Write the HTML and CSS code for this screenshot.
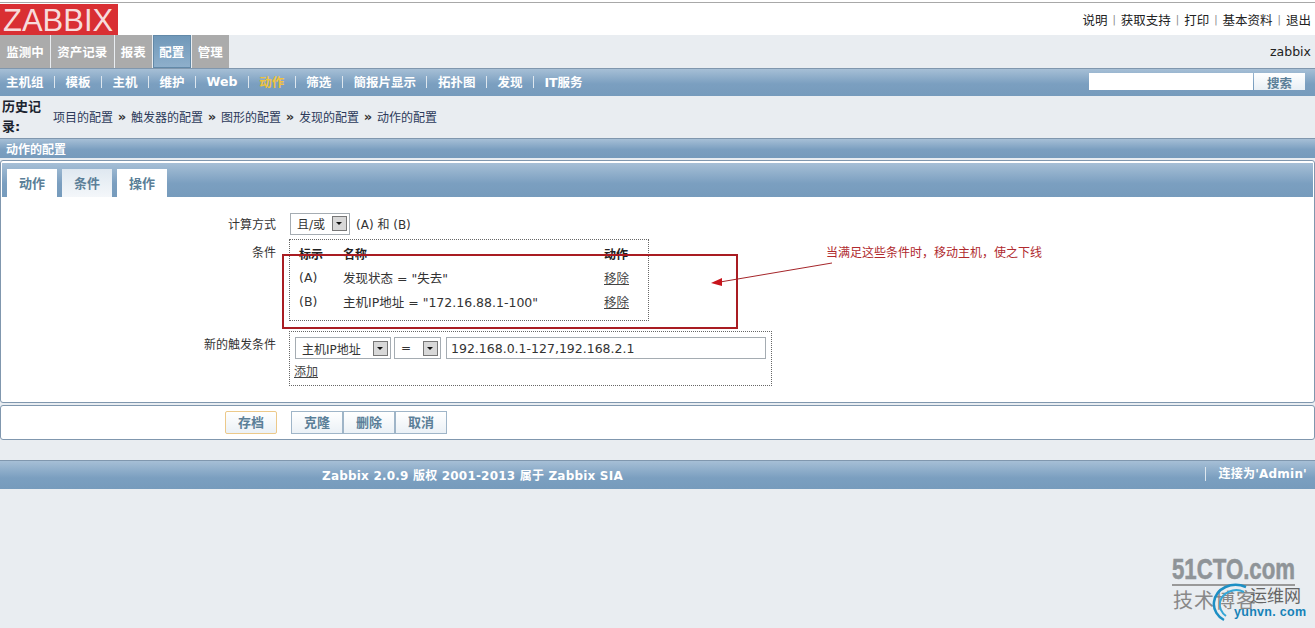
FILE: index.html
```html
<!DOCTYPE html>
<html lang="zh-CN">
<head>
    <meta charset="UTF-8">
    <title>动作的配置</title>
    <link rel="stylesheet" href="styles.css">
</head>
<body>
    <div class="header">
        <div class="logo">ZABBIX</div>
        <div class="top-links">
            <a>说明</a><i>|</i><a>获取支持</a><i>|</i><a>打印</a><i>|</i><a>基本资料</a><i>|</i><a>退出</a>
        </div>
    </div>

    <div class="main-menu">
        <a>监测中</a><a>资产记录</a><a>报表</a><a class="active">配置</a><a>管理</a>
        <span class="user">zabbix</span>
    </div>

    <div class="sub-menu">
        <a>主机组</a><i></i><a>模板</a><i></i><a>主机</a><i></i><a>维护</a><i></i><a>Web</a><i></i><a class="current">动作</a><i></i><a>筛选</a><i></i><a>簡报片显示</a><i></i><a>拓扑图</a><i></i><a>发现</a><i></i><a>IT服务</a>
        <div class="search">
            <div class="search-input"></div>
            <div class="search-btn">搜索</div>
        </div>
    </div>

    <div class="history">
        <strong>历史记录:</strong>
        <div class="trail">
            <a>项目的配置</a><b>»</b><a>触发器的配置</a><b>»</b><a>图形的配置</a><b>»</b><a>发现的配置</a><b>»</b><a>动作的配置</a>
        </div>
    </div>

    <div class="title-bar">动作的配置</div>

    <div class="box form-box">
        <div class="tabs">
            <a>动作</a><a class="selected">条件</a><a>操作</a>
        </div>
        <div class="form">
            <div class="form-row calc-row">
                <label>计算方式</label>
                <div class="field">
                    <span class="select calc-select">且/或<span class="arrow"></span></span>
                    <span>(A) 和 (B)</span>
                </div>
            </div>
            <div class="form-row cond-row">
                <label>条件</label>
                <div class="dotted cond-box">
                    <div class="cond-line cond-head"><span class="c1">标示</span><span class="c2">名称</span><span>动作</span></div>
                    <div class="cond-line"><span class="c1">(A)</span><span class="c2">发现状态 = "失去"</span><a class="link">移除</a></div>
                    <div class="cond-line"><span class="c1">(B)</span><span class="c2">主机IP地址 = "172.16.88.1-100"</span><a class="link">移除</a></div>
                </div>
            </div>
            <div class="form-row new-row">
                <label>新的触发条件</label>
                <div class="dotted new-box">
                    <div class="new-line">
                        <span class="select type-select">主机IP地址<span class="arrow"></span></span>
                        <span class="select op-select">=<span class="arrow"></span></span>
                        <span class="text-input">192.168.0.1-127,192.168.2.1</span>
                    </div>
                    <a class="link add-link">添加</a>
                </div>
            </div>
        </div>
    </div>

    <div class="box button-box">
        <a class="btn save">存档</a>
        <div class="btn-group">
            <a class="btn">克隆</a><a class="btn">删除</a><a class="btn">取消</a>
        </div>
    </div>

    <div class="footer">
        <span class="copyright">Zabbix 2.0.9 版权 2001-2013 属于 Zabbix SIA</span>
        <span class="connected">连接为'Admin'</span>
    </div>

    <!-- annotation drawn over the screenshot -->
    <svg class="annotation" width="1315" height="628" viewBox="0 0 1315 628">
        <rect x="283" y="255" width="454" height="73" fill="none" stroke="#a91c22" stroke-width="2"/>
        <line x1="832" y1="263" x2="720" y2="282" stroke="#a5252a" stroke-width="1"/>
        <polygon points="711,283 722,278 722,286" fill="#c8141c"/>
    </svg>
    <div class="note">当满足这些条件时，移动主机，使之下线</div>

    <div class="watermark">
        <div class="wm-top">51CTO.com</div>
        <div class="wm-line"></div>
        <div class="wm-cn">技术博客</div>
        <div class="wm-cn2">运维网</div>
        <svg class="wm-ring" width="38" height="40" viewBox="0 0 38 40">
            <path d="M34 5C20-1 4 6 2 20c-1 8 4 15 10 18" fill="none" stroke="#1d8fc4" stroke-width="2.5"/>
            <path d="M32 10C22 5 10 11 8 20c-1 6 2 11 6 14" fill="none" stroke="#36a6d6" stroke-width="2"/>
        </svg>
        <div class="wm-site">yunvn. com</div>
    </div>
</body>
</html>
```

FILE: styles.css
```css
html, body {
    margin: 0;
    padding: 0;
}

body {
    position: relative;
    width: 1315px;
    height: 628px;
    overflow: hidden;
    background: #e9edf1;
    font-family: "DejaVu Sans", "Noto Sans CJK SC", sans-serif;
    font-size: 12px;
    color: #333;
}

i {
    font-style: normal;
}

.header {
    display: flex;
    justify-content: space-between;
    align-items: center;
    height: 32px;
    padding-top: 3px;
    background: #fff;
    box-shadow: inset 0 2px 0 #fff, inset 0 3px 0 #a8a8a8;
}

.logo {
    width: 118px;
    height: 29px;
    margin-top: 1px;
    padding-top: 2px;
    background: #d92f33;
    color: #f7dcdc;
    font-family: "Liberation Sans", sans-serif;
    font-size: 31px;
    line-height: 29px;
    text-indent: 3px;
}

.top-links {
    display: flex;
    align-items: center;
    padding-right: 4px;
    color: #222;
    font-size: 12.5px;
}

.top-links i {
    margin: 0 5px;
    color: #888;
    font-size: 10px;
}

.main-menu {
    display: flex;
    align-items: stretch;
    height: 33px;
}

.main-menu a {
    display: flex;
    align-items: center;
    padding: 0 6.25px;
    margin-right: 1px;
    background: #ababab;
    color: #fff;
    font-weight: bold;
    font-size: 12.5px;
}

.main-menu a.active {
    background: linear-gradient(#6f97b8, #8fb0cc);
    box-shadow: inset 0 0 0 1px #6289a8;
}

.main-menu .user {
    margin-left: auto;
    padding-right: 4px;
    align-self: center;
    font-size: 12.5px;
    color: #222;
}

.sub-menu {
    display: flex;
    align-items: center;
    height: 28px;
    padding: 0 0 2px 6px;
    background: linear-gradient(#a6bfd6, #7b9fc0 55%, #769bbc);
    border-top: 1px solid #8097ae;
    box-sizing: border-box;
    color: #fff;
    font-weight: bold;
    font-size: 12.5px;
}

.sub-menu i {
    width: 1px;
    height: 12px;
    margin: 0 10.5px;
    background: #dde6ee;
}

.sub-menu .current {
    color: #f0c33c;
}

.search {
    display: flex;
    margin-left: auto;
    margin-right: 10px;
    height: 17px;
}

.search-input {
    width: 164px;
    background: #fff;
}

.search-btn {
    width: 51px;
    height: 17px;
    box-sizing: border-box;
    margin-left: 1px;
    padding-top: 4px;
    background: linear-gradient(#fff, #e8eff5);
    color: #5b7f98;
    text-align: center;
    line-height: 13px;
}

.history {
    display: flex;
    align-items: center;
    height: 42px;
    box-sizing: border-box;
    padding-left: 2px;
    color: #2c3a5a;
}

.history strong {
    width: 51px;
    flex: none;
    color: #1c2430;
    font-size: 13px;
    line-height: 20px;
}

.trail {
    display: flex;
    align-items: center;
    padding-bottom: 2px;
}

.trail b {
    width: 18px;
    color: #333;
    font-size: 13px;
    text-align: center;
}

.title-bar {
    height: 20px;
    padding: 3px 0 0 6px;
    background: linear-gradient(#a6bfd6, #7b9fc0 55%, #769bbc);
    border-top: 1px solid #8097ae;
    box-sizing: border-box;
    color: #fff;
    font-weight: bold;
    line-height: 16px;
}

.box {
    background: #fff;
    border: 1px solid #8097ae;
    border-radius: 3px;
    box-sizing: border-box;
}

.form-box {
    height: 243px;
    margin-top: 2px;
    padding-top: 2px;
}

.tabs {
    display: flex;
    align-items: flex-end;
    gap: 5px;
    height: 34px;
    margin: 0 1px;
    padding-left: 5px;
    background: linear-gradient(#a6bfd6, #7b9fc0 60%, #769bbc);
}

.tabs a {
    width: 50px;
    height: 28px;
    box-sizing: border-box;
    padding-top: 1px;
    background: #fff;
    color: #5b7f98;
    font-weight: bold;
    font-size: 13px;
    line-height: 27px;
    text-align: center;
}

.tabs a.selected {
    background: linear-gradient(#dfe8f0, #f4f7fa);
}

.form {
    display: flex;
    flex-direction: column;
    padding-top: 13px;
}

.form-row {
    display: flex;
}

.form-row label {
    width: 275px;
    text-align: right;
    color: #333;
}

.calc-row {
    height: 27px;
    align-items: center;
}

.field {
    display: flex;
    align-items: center;
    gap: 6px;
    margin-left: 14px;
}

.select {
    display: inline-flex;
    align-items: center;
    justify-content: space-between;
    box-sizing: border-box;
    height: 22px;
    padding: 0 2px 0 6px;
    border: 1px solid #a5acb2;
    background: #fff;
}

.calc-select {
    width: 60px;
}

.type-select {
    width: 96px;
}

.op-select {
    width: 47px;
}

.arrow {
    position: relative;
    width: 15px;
    height: 15px;
    box-sizing: border-box;
    border: 1px solid #777;
    background: #d8d8d8;
}

.arrow::after {
    content: "";
    position: absolute;
    left: 3px;
    top: 5px;
    border: 3.5px solid transparent;
    border-top-color: #111;
    border-bottom: 0;
}

.dotted {
    box-sizing: border-box;
    border: 1px dotted #666;
    background: #fff;
}

.cond-row {
    margin-top: 2px;
    height: 82px;
}

.cond-row label,
.new-row label {
    line-height: 18px;
    padding-top: 5px;
}

.cond-box {
    width: 360px;
    height: 82px;
    margin-left: 13px;
    padding: 3px 9px;
}

.cond-line {
    display: flex;
    align-items: center;
    height: 24px;
    font-size: 12.5px;
}

.cond-head {
    height: 20px;
    margin-bottom: 2px;
    font-size: 12px;
    font-weight: bold;
    color: #222;
}

.c1 {
    width: 44px;
}

.c2 {
    width: 261px;
}

.link {
    color: #444;
    text-decoration: underline;
}

.new-row {
    margin-top: 10px;
}

.new-box {
    width: 483px;
    height: 55px;
    margin-left: 13px;
    padding: 5px;
}

.new-line {
    display: flex;
    gap: 3px;
    height: 24px;
}

.add-link {
    display: block;
    margin: 1px 0 0 -1px;
}

.text-input {
    display: flex;
    align-items: center;
    flex: 1;
    height: 22px;
    box-sizing: border-box;
    margin-left: 2px;
    padding-left: 4px;
    border: 1px solid #a5acb2;
    font-size: 12.5px;
}

.button-box {
    display: flex;
    align-items: center;
    height: 35px;
    margin-top: 2px;
    padding-left: 224px;
}

.btn {
    display: block;
    width: 52px;
    height: 23px;
    box-sizing: border-box;
    padding-top: 1px;
    background: linear-gradient(#fff, #ebf1f6);
    border: 1px solid #9fb5c8;
    color: #5b7f98;
    font-weight: bold;
    font-size: 13px;
    line-height: 20px;
    text-align: center;
}

.btn.save {
    border-color: #ecc98a;
    border-radius: 2px;
}

.btn-group {
    display: flex;
    margin-left: 14px;
}

.footer {
    display: flex;
    align-items: center;
    height: 29px;
    margin-top: 20px;
    padding-bottom: 2px;
    background: linear-gradient(#a6bfd6, #7b9fc0 60%, #769bbc);
    border-top: 1px solid #8097ae;
    box-sizing: border-box;
    color: #fff;
    font-weight: bold;
    font-size: 12px;
}

.copyright {
    margin-left: 322px;
    letter-spacing: 0.2px;
}

.connected {
    margin-left: auto;
    padding-left: 13px;
    padding-right: 8px;
    border-left: 1px solid #dde6ee;
    line-height: 14px;
    letter-spacing: 0.2px;
}

.annotation {
    position: absolute;
    left: 0;
    top: 0;
    pointer-events: none;
}

.note {
    position: absolute;
    left: 826px;
    top: 244px;
    color: #b02a2e;
    font-family: "Noto Sans CJK SC", sans-serif;
    font-size: 12px;
    line-height: 16px;
}

.watermark {
    position: absolute;
    left: 1172px;
    top: 555px;
    width: 143px;
    height: 73px;
    font-family: "Noto Sans CJK SC", sans-serif;
}

.wm-top {
    color: #8f9498;
    -webkit-text-stroke: 0.6px #8f9498;
    font-family: "Liberation Sans", sans-serif;
    font-size: 30px;
    font-weight: bold;
    line-height: 28px;
    transform: scaleX(0.74);
    transform-origin: left;
    white-space: nowrap;
}

.wm-line {
    width: 123px;
    height: 2px;
    margin-top: 1px;
    background: #999;
}

.wm-cn {
    position: absolute;
    left: 1px;
    top: 32px;
    color: #888;
    font-size: 20px;
    line-height: 26px;
    letter-spacing: 1px;
    white-space: nowrap;
}

.wm-cn2 {
    position: absolute;
    left: 78px;
    top: 29px;
    color: #666;
    font-size: 17px;
    line-height: 22px;
    white-space: nowrap;
}

.wm-ring {
    position: absolute;
    left: 40px;
    top: 27px;
}

.wm-site {
    position: absolute;
    left: 62px;
    top: 49px;
    color: #1682b8;
    font-family: "Liberation Sans", sans-serif;
    font-size: 12.5px;
    font-weight: bold;
    letter-spacing: 0.3px;
    line-height: 16px;
    white-space: nowrap;
}
```
